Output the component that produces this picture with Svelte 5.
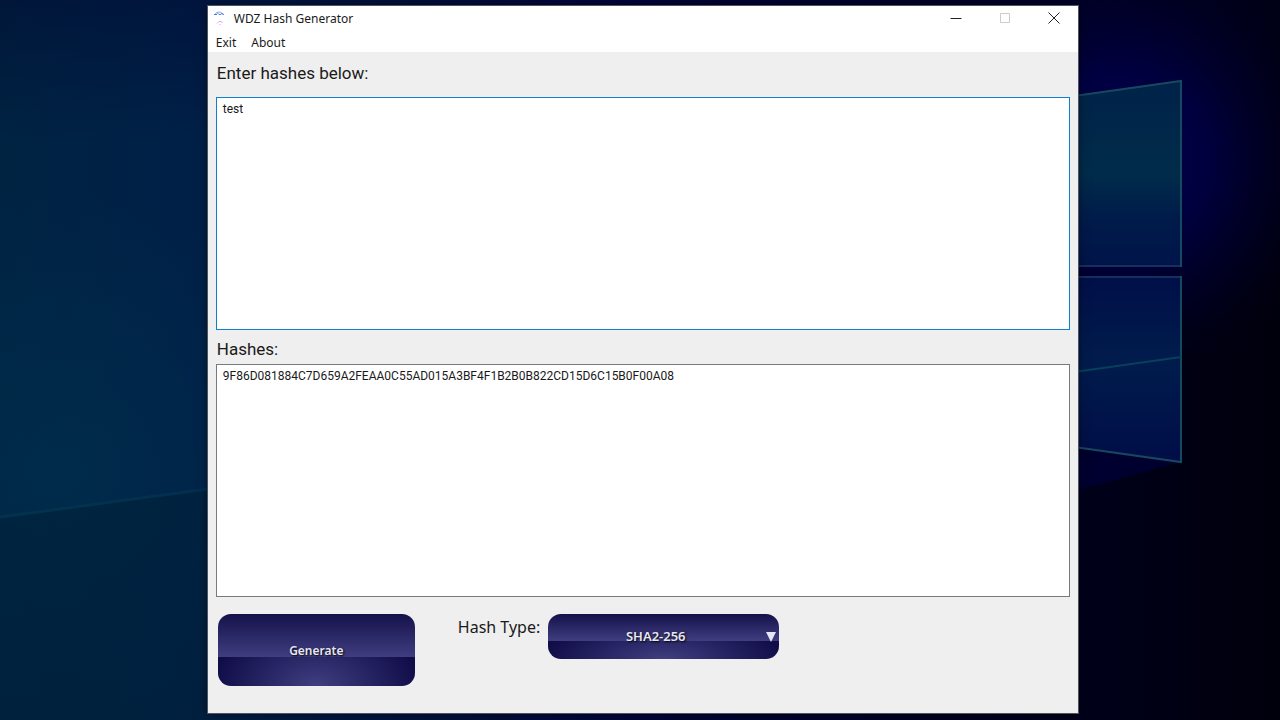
<script>
    let input = "test";
    let hashes = "9F86D081884C7D659A2FEAA0C55AD015A3BF4F1B2B0B822CD15D6C15B0F00A08";
    let hashType = "SHA2-256";
    const hashTypes = ["SHA1", "SHA2-256", "SHA2-384", "SHA2-512"];
    const algorithms = {
        "SHA1": "SHA-1",
        "SHA2-256": "SHA-256",
        "SHA2-384": "SHA-384",
        "SHA2-512": "SHA-512",
    };

    async function hashLine(line) {
        const data = new TextEncoder().encode(line);
        const digest = await crypto.subtle.digest(algorithms[hashType], data);
        return Array.from(new Uint8Array(digest))
            .map((b) => b.toString(16).padStart(2, "0"))
            .join("")
            .toUpperCase();
    }

    async function generate() {
        try {
            const lines = await Promise.all(input.split("\n").map(hashLine));
            hashes = lines.join("\n");
        } catch (error) {
            console.error(error);
        }
    }
</script>

<div class="desktop">
    <svg class="wallpaper" viewBox="0 0 1280 720" preserveAspectRatio="none" aria-hidden="true">
        <defs>
            <linearGradient id="sky" x1="0" y1="0" x2="1" y2="0">
                <stop offset="0" stop-color="#002342" />
                <stop offset="0.16" stop-color="#002048" />
                <stop offset="0.5" stop-color="#00053a" />
                <stop offset="0.85" stop-color="#00001a" />
                <stop offset="1" stop-color="#00000c" />
            </linearGradient>
            <radialGradient id="glow" gradientUnits="userSpaceOnUse" cx="1120" cy="160" r="220">
                <stop offset="0" stop-color="#000050" />
                <stop offset="0.4" stop-color="#00004a" stop-opacity="0.8" />
                <stop offset="0.7" stop-color="#000038" stop-opacity="0.4" />
                <stop offset="1" stop-color="#000020" stop-opacity="0" />
            </radialGradient>
            <radialGradient id="haze" gradientUnits="userSpaceOnUse" cx="60" cy="470" r="280">
                <stop offset="0" stop-color="#002f4e" stop-opacity="0.7" />
                <stop offset="1" stop-color="#002f4e" stop-opacity="0" />
            </radialGradient>
            <linearGradient id="top-dark" x1="0" y1="0" x2="0" y2="1">
                <stop offset="0" stop-color="#00002a" stop-opacity="0.35" />
                <stop offset="1" stop-color="#00002a" stop-opacity="0" />
            </linearGradient>
            <linearGradient id="pane-top" x1="0" y1="0" x2="0" y2="1">
                <stop offset="0" stop-color="#002249" />
                <stop offset="0.5" stop-color="#002c4a" />
                <stop offset="0.75" stop-color="#001b4a" />
                <stop offset="1" stop-color="#00144a" />
            </linearGradient>
            <linearGradient id="pane-bottom" x1="0" y1="0" x2="0" y2="1">
                <stop offset="0" stop-color="#000f49" />
                <stop offset="0.45" stop-color="#001c4c" />
                <stop offset="1" stop-color="#000d48" />
            </linearGradient>
        </defs>
        <rect width="1280" height="720" fill="url(#sky)" />
        <rect width="1280" height="720" fill="url(#haze)" />
        <rect width="1280" height="140" fill="url(#top-dark)" />
        <rect x="800" width="480" height="480" fill="url(#glow)" />
        <path d="M0 519 L208 490 V720 H0 Z" fill="#001f35" opacity="0.45" />
        <path d="M0 517 L208 489" stroke="#07455a" stroke-width="3" opacity="0.3" />
        <path d="M1070 448 L1181 462 L1070 492 Z" fill="#00003a" opacity="0.7" />
        <path d="M1060 98 L1181 81 V266 H1060 Z" fill="url(#pane-top)" />
        <path d="M1060 277 H1181 V462 L1060 445 Z" fill="url(#pane-bottom)" />
        <path d="M1060 266 H1181 M1060 277 H1181" stroke="#15305c" stroke-width="2" />
        <path d="M1060 98 L1181 81 V267 M1181 276 V462 L1060 445" fill="none" stroke="#16485e" stroke-width="2" />
        <path d="M1060 374 L1181 357" stroke="#07405a" stroke-width="2" />
    </svg>

    <main class="window">
        <header class="titlebar">
            <svg class="app-icon" width="16" height="16" viewBox="0 0 16 16" aria-hidden="true">
                <path d="M3 4 Q7 0 11 4" fill="none" stroke="#8fb0ea" />
                <path d="M2 4.5 h3 M5 2.5 l2 2 M7 4.5 h2 M9 3.5 l3 1" fill="none" stroke="#4d79dc" />
                <path d="M5 13.5 Q7 10.5 9 11.5 T10 13" fill="none" stroke="#dfa9ee" />
                <path d="M7 14.5 h2" stroke="#efcff5" />
            </svg>
            <h1>WDZ Hash Generator</h1>
            <div class="window-buttons">
                <button aria-label="Minimize">
                    <svg width="12" height="12" viewBox="0 0 12 12"><path d="M0.5 6.5 h11" /></svg>
                </button>
                <button aria-label="Maximize" disabled>
                    <svg width="12" height="12" viewBox="0 0 12 12"><path d="M1.5 1.5 h9 v9 h-9 Z" /></svg>
                </button>
                <button aria-label="Close">
                    <svg width="12" height="12" viewBox="0 0 12 12"><path d="M0.5 0.5 L11.5 11.5 M11.5 0.5 L0.5 11.5" /></svg>
                </button>
            </div>
        </header>

        <nav class="menu">
            <button>Exit</button>
            <button>About</button>
        </nav>

        <div class="content">
            <label class="input-label" for="input">Enter hashes below:</label>
            <textarea id="input" class="active" spellcheck="false" bind:value={input}></textarea>
            <label class="output-label" for="output">Hashes:</label>
            <textarea id="output" spellcheck="false" readonly value={hashes}></textarea>

            <div class="controls">
                <button class="glossy generate" on:click={generate}>Generate</button>
                <label class="type-label" for="hash-type">Hash Type:</label>
                <div class="select-box">
                    <select id="hash-type" class="glossy" bind:value={hashType}>
                        {#each hashTypes as type}
                            <option value={type}>{type}</option>
                        {/each}
                    </select>
                    <svg class="arrow" width="10" height="10" viewBox="0 0 10 10" aria-hidden="true">
                        <path d="M0 0 H10 L5 10 Z" />
                    </svg>
                </div>
            </div>
        </div>
    </main>
</div>

<style>
    :global(body) {
        margin: 0;
        background-color: #00102c;
    }

    .desktop {
        position: relative;
        display: flex;
        justify-content: center;
        min-height: 100vh;
        padding: 6px 0 7px 6px;
        box-sizing: border-box;
        font-family: "Noto Sans", "Open Sans", sans-serif;
        font-size: 12px;
        color: #1a1a1a;
    }

    .wallpaper {
        position: absolute;
        inset: 0;
        width: 100%;
        height: 100%;
    }

    .window {
        position: relative;
        display: flex;
        flex-direction: column;
        width: 68vw;
        background-color: #efefef;
        box-shadow: 0 0 0 1px #50545f, 0 2px 10px rgba(0, 0, 0, 0.5);
    }

    button,
    select,
    textarea {
        margin: 0;
        font-family: inherit;
        font-size: 12px;
        color: inherit;
    }

    .titlebar {
        display: flex;
        align-items: center;
        height: 24px;
        padding-left: 4px;
        background-color: #fff;
    }

    .titlebar h1 {
        flex: 1;
        margin: 0 0 0 6px;
        font-size: 12px;
        font-weight: 400;
    }

    .window-buttons {
        display: flex;
    }

    .window-buttons button {
        display: flex;
        align-items: center;
        justify-content: center;
        width: 49px;
        height: 24px;
        padding: 0;
        border: 0;
        background: none;
    }

    .window-buttons path {
        fill: none;
        stroke: #222;
    }

    .window-buttons button:disabled path {
        stroke: #ccc;
    }

    .menu {
        display: flex;
        height: 22px;
        background-color: #fff;
    }

    .menu button {
        padding: 2px 7px 0 8px;
        border: 0;
        background: none;
    }

    .content {
        flex: 1;
        display: flex;
        flex-direction: column;
        padding: 8px 8px 27px;
    }

    .input-label,
    .output-label {
        padding-left: 1px;
        font-family: Roboto, "Noto Sans", sans-serif;
        font-size: 17px;
    }

    .input-label {
        height: 37px;
        line-height: 26px;
    }

    .output-label {
        height: 34px;
        line-height: 38px;
    }

    textarea {
        flex: 1;
        min-height: 120px;
        padding: 2px 6px;
        box-sizing: border-box;
        border: 1px solid #7a7a7a;
        border-radius: 0;
        background-color: #fff;
        font-family: Roboto, "Noto Sans", sans-serif;
        line-height: 18px;
        resize: none;
        outline: none;
    }

    textarea.active {
        border-color: #0f80cf;
    }

    .controls {
        display: flex;
        align-items: flex-start;
        margin-top: 17px;
        padding-left: 2px;
    }

    .glossy {
        border: 0;
        border-radius: 13px;
        background:
            linear-gradient(#14114a, #403e80 60%, transparent 60%),
            radial-gradient(ellipse 52% 90% at 50% 100%, #403e80, #100d49);
        color: #e6e6f5;
        font-weight: 600;
        text-shadow: 1px 1px 2px #000;
    }

    .generate {
        width: 197px;
        height: 72px;
    }

    .type-label {
        margin: 0 8px 0 43px;
        font-size: 16px;
        line-height: 26px;
    }

    .select-box {
        position: relative;
    }

    select {
        appearance: none;
        width: 231px;
        height: 45px;
        padding: 0 16px 2px 0;
        font-size: 13px;
        text-align: center;
        text-align-last: center;
    }

    option {
        color: #1a1a1a;
        text-shadow: none;
    }

    .arrow {
        position: absolute;
        top: 18px;
        right: 3px;
        fill: #e6e6f5;
        pointer-events: none;
    }
</style>
